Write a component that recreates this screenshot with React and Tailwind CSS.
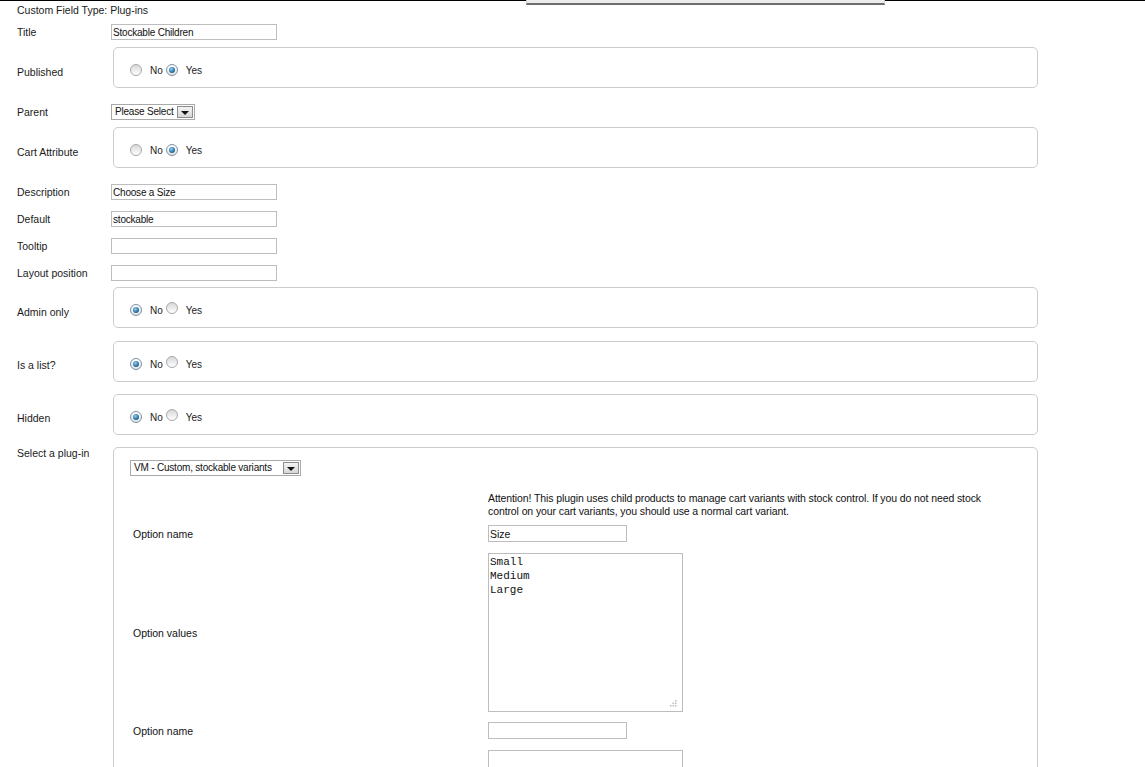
import React from "react";

const font = "font-['Liberation_Sans',Arial,sans-serif]";

function Radio({ checked }) {
  if (checked) {
    return (
      <span className="inline-flex h-[12px] w-[12px] items-center justify-center rounded-full border border-[#7f8f9f] bg-[linear-gradient(#ffffff,#dfe6ec)]">
        <span className="h-[6px] w-[6px] rounded-full bg-[radial-gradient(circle_at_40%_35%,#8fd0f5,#1b5f8f_70%)]" />
      </span>
    );
  }
  return (
    <span className="inline-block h-[12px] w-[12px] rounded-full border border-[#a8a8a8] bg-[linear-gradient(#d8d8d8,#ffffff)]" />
  );
}

function RadioBox({ yes, pt = "pt-[19px]", label, mt }) {
  return (
    <div className={`flex ${mt}`}>
      <div className={`w-[96px] shrink-0 leading-[12px] ${pt}`}>{label}</div>
      <div className="h-[41px] w-[925px] rounded-[5px] border border-[#cccccc] pl-[16px] pt-[14px]">
        <div className="flex items-center text-[10px] leading-[12px]">
          <Radio checked={!yes} />
          <span className="ml-[8px] mt-[3px]">No</span>
          <span className="ml-[3px]">
            <Radio checked={yes} />
          </span>
          <span className="ml-[8px] mt-[3px]">Yes</span>
        </div>
      </div>
    </div>
  );
}

function TextRow({ label, value, mt }) {
  return (
    <div className={`flex h-[16px] items-center ${mt}`}>
      <div className="w-[94px] shrink-0 leading-[16px]">{label}</div>
      <input
        readOnly
        value={value}
        className="h-[16px] w-[166px] border border-[#bdbdbd] bg-white px-[1px] text-[10px] leading-[14px] tracking-[-0.2px] text-[#111] outline-none"
      />
    </div>
  );
}

function SelectBox({ text, width }) {
  return (
    <div className={`flex h-[16px] ${width} items-center justify-between border border-[#a9a9a9] bg-white pl-[3px] pr-[1px]`}>
      <span className="text-[10px] leading-[12px] tracking-[-0.2px] text-[#111]">{text}</span>
      <span className="flex h-[12px] w-[16px] items-center justify-center border border-[#8c8c8c] bg-[linear-gradient(#f4f4f4,#d6d6d6)]">
        <svg width="8" height="5" viewBox="0 0 8 5" className="mt-[3px]">
          <path d="M0 0 H8 L4 4 Z" fill="#111" />
        </svg>
      </span>
    </div>
  );
}

function Grip() {
  return (
    <svg width="7" height="7" viewBox="0 0 7 7" className="absolute bottom-[4px] right-[5px]">
      <rect x="5" y="0" width="1.5" height="1.5" fill="#bbb" />
      <rect x="2.5" y="2.5" width="1.5" height="1.5" fill="#bbb" />
      <rect x="5" y="2.5" width="1.5" height="1.5" fill="#bbb" />
      <rect x="0" y="5" width="1.5" height="1.5" fill="#bbb" />
      <rect x="2.5" y="5" width="1.5" height="1.5" fill="#bbb" />
      <rect x="5" y="5" width="1.5" height="1.5" fill="#bbb" />
    </svg>
  );
}

function Area({ value }) {
  return (
    <div className="relative h-[159px] w-[195px] border border-[#bdbdbd] bg-white">
      <textarea
        readOnly
        value={value}
        className="h-full w-full resize-none overflow-hidden bg-white pl-[1px] pt-[1px] font-['Liberation_Mono','Courier_New',monospace] text-[11px] leading-[14px] text-[#111] outline-none"
      />
      <Grip />
    </div>
  );
}

export default function App() {
  return (
    <div className={`h-[767px] w-[1145px] overflow-hidden bg-white text-[10.5px] text-[#1a1a1a] ${font}`}>
      <div className="flex h-[5px] items-start">
        <div className="h-[1px] w-[526px] bg-black" />
        <div className="h-[5px] w-[359px] border-x border-b-2 border-x-[#cfcfcf] border-b-[#6e6e6e] bg-[#ececec]" />
        <div className="h-[1px] flex-1 bg-black" />
      </div>

      <div className="pl-[17px]">
        <div className="leading-[10px]">Custom Field Type: Plug-ins</div>

        <TextRow label="Title" value="Stockable Children" mt="mt-[9px]" />
        <RadioBox label="Published" yes mt="mt-[7px]" />

        <div className="mt-[16px] flex h-[16px] items-center">
          <div className="w-[94px] shrink-0 leading-[16px]">Parent</div>
          <SelectBox text="Please Select" width="w-[84px]" />
        </div>

        <RadioBox label="Cart Attribute" yes mt="mt-[7px]" />

        <TextRow label="Description" value="Choose a Size" mt="mt-[16px]" />
        <TextRow label="Default" value="stockable" mt="mt-[11px]" />
        <TextRow label="Tooltip" value="" mt="mt-[11px]" />
        <TextRow label="Layout position" value="" mt="mt-[11px]" />

        <RadioBox label="Admin only" yes={false} mt="mt-[6px]" />
        <RadioBox label="Is a list?" yes={false} pt="pt-[18px]" mt="mt-[13px]" />
        <RadioBox label="Hidden" yes={false} pt="pt-[18px]" mt="mt-[12px]" />

        <div className="mt-[12px] flex">
          <div className="w-[96px] shrink-0 leading-[12px]">Select a plug-in</div>
          <div className="w-[925px] rounded-[5px] border border-[#cccccc] pb-[40px] pl-[16px] pt-[12px]">
            <SelectBox text="VM - Custom, stockable variants" width="w-[171px]" />

            <div className="mt-[16px] grid grid-cols-[358px_1fr] items-center text-[10.5px] text-[#111]">
              <div />
              <div className="text-[10.5px] leading-[13px] tracking-[-0.1px]">
                Attention! This plugin uses child products to manage cart variants with stock control. If you do not need stock
                <br />
                control on your cart variants, you should use a normal cart variant.
              </div>

              <div className="mt-[7px] pl-[3px] leading-[12px]">Option name</div>
              <input
                readOnly
                value="Size"
                className="mt-[7px] h-[17px] w-[139px] border border-[#bdbdbd] bg-white px-[1px] text-[10.5px] leading-[14px] text-[#111] outline-none"
              />

              <div className="mt-[11px] pl-[3px] leading-[12px]">Option values</div>
              <div className="mt-[11px]">
                <Area value={"Small\nMedium\nLarge"} />
              </div>

              <div className="mt-[10px] pl-[3px] leading-[12px]">Option name</div>
              <input
                readOnly
                value=""
                className="mt-[10px] h-[17px] w-[139px] border border-[#bdbdbd] bg-white px-[1px] text-[10.5px] outline-none"
              />

              <div />
              <div className="mt-[11px]">
                <Area value="" />
              </div>
            </div>
          </div>
        </div>
      </div>
    </div>
  );
}
